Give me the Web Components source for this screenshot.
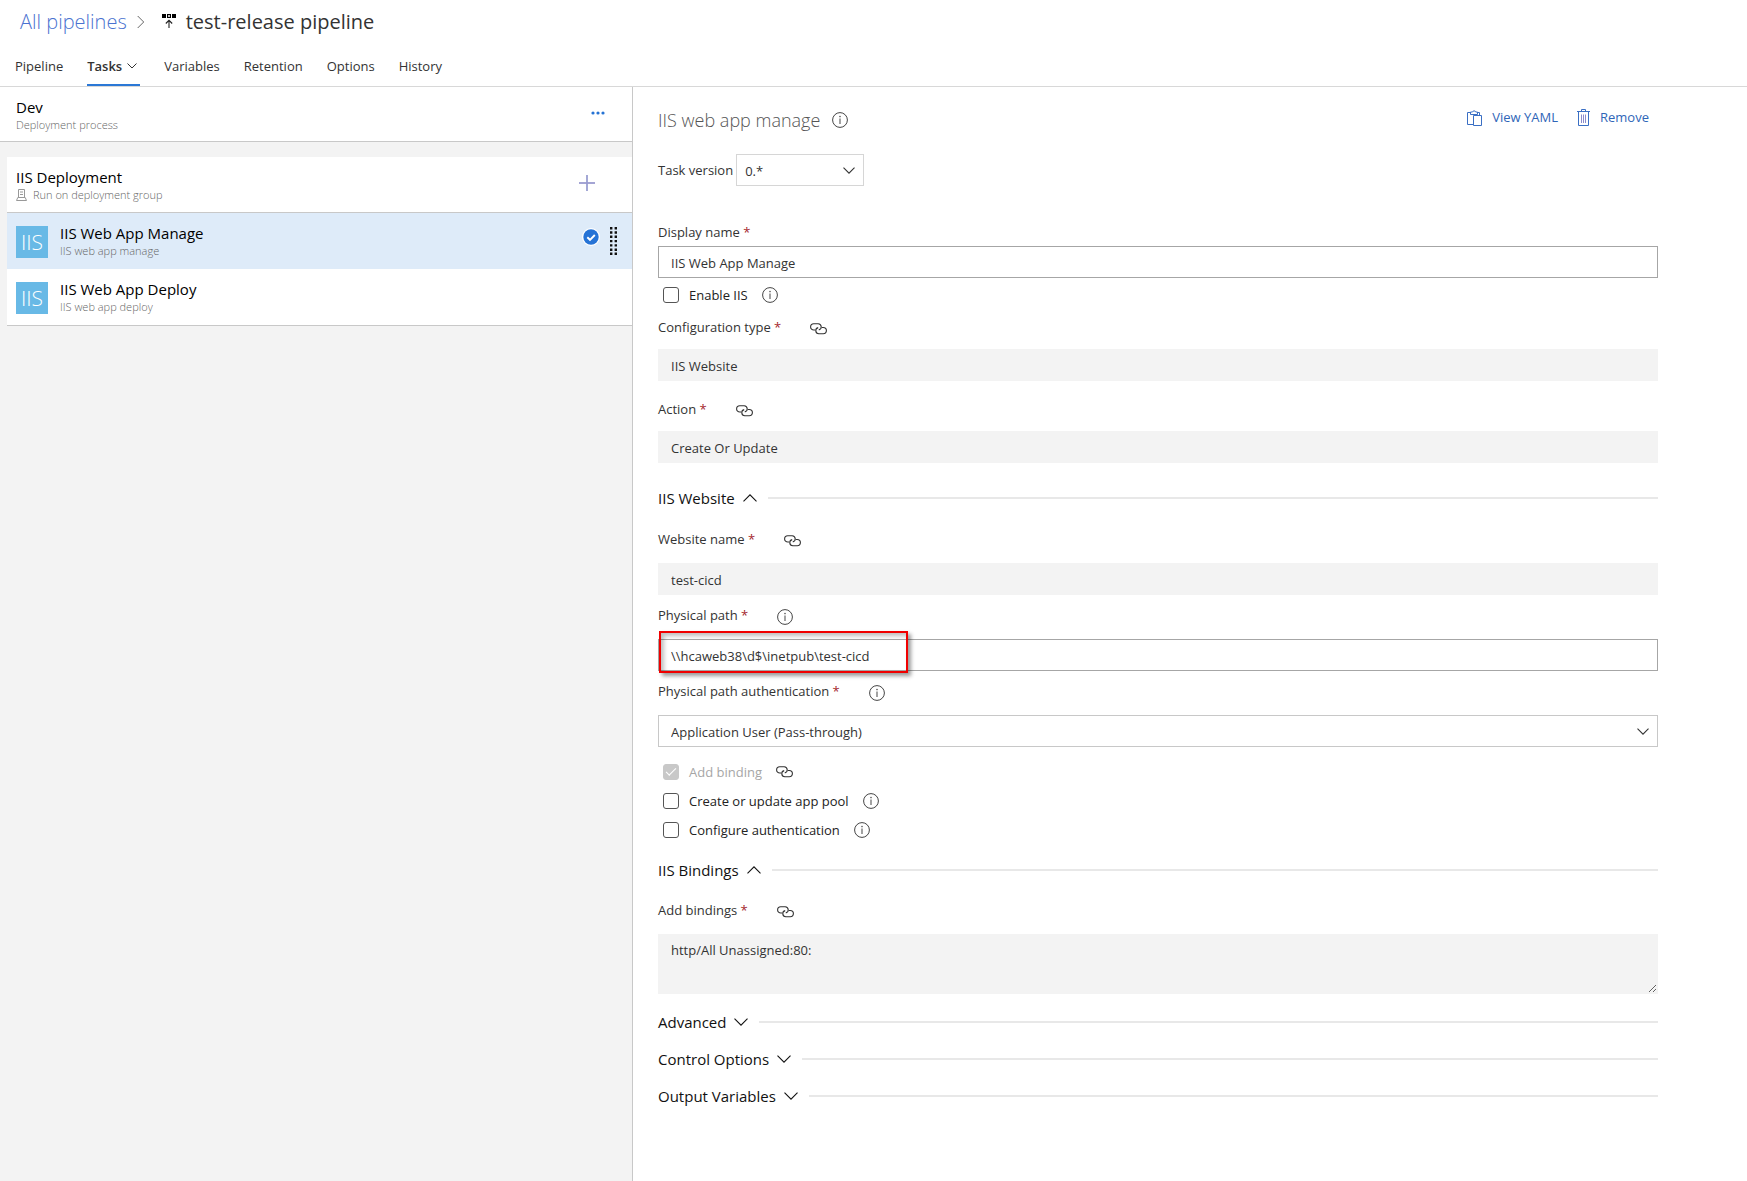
<!DOCTYPE html>
<html lang="en">
<head>
<meta charset="utf-8">
<title>test-release pipeline</title>
<style>
html, body { height: 100%; margin: 0; }
body { background: #fff; color: #333; font: 13px/20px "Open Sans", "Noto Sans", sans-serif; }
</style>
</head>
<body>
<release-editor></release-editor>
<script>
const reset = `
  *, *::before, *::after { box-sizing: border-box; }
  [hidden] { display: none !important; }
  svg { display: block; flex: none; }
  button, input, select, textarea { font: inherit; color: inherit; margin: 0; padding: 0; border: 0; background: none; border-radius: 0; }
  button { cursor: pointer; text-align: left; }
  a { color: inherit; text-decoration: none; }
`;

const define = (name, render, css, after) => customElements.define(name, class extends HTMLElement {
  connectedCallback() {
    if (this.shadowRoot) return;
    const root = this.attachShadow({ mode: "open" });
    root.innerHTML = `<style>${reset}${css}</style>${render(this)}`;
    if (after) after(this, root);
  }
});

const icons = {
  info: [16, 16, `<circle cx="8" cy="8" r="7.4" fill="none" stroke="#444"/><path d="M8 6.6V12" stroke="#555" stroke-width="1.1"/><circle cx="8" cy="4.6" r=".8" fill="#555"/>`],
  link: [17, 12, `<g fill="none" stroke="#333" stroke-width="1.1"><path d="M5.200 7H3.800A3.200 3.100 0 0 1 3.800.8H8.200A3.200 3.100 0 0 1 8.800 6.900"/><path d="M11.800 4.500H13.200A3.200 3.100 0 0 1 13.200 10.700H8.800A3.200 3.100 0 0 1 8.200 4.600"/></g>`],
  down: [12, 7, `<path d="M.5.6 6 6.100 11.500.6" fill="none" stroke="currentColor" stroke-width="1.1"/>`],
  smalldown: [10, 6, `<path d="M.5.5 5 5 9.500.5" fill="none" stroke="currentColor"/>`],
  up: [14, 8, `<path d="M.5 7.300 7 .8 13.500 7.300" fill="none" stroke="currentColor" stroke-width="1.1"/>`],
  bigdown: [14, 8, `<path d="M.5.7 7 7.200 13.500.7" fill="none" stroke="currentColor" stroke-width="1.1"/>`],
  right: [8, 14, `<path d="M.7 1 6.700 7 .7 13" fill="none" stroke="#666"/>`],
  release: [15, 14, `<path d="M0 0h4v4H0zM10 0h4v4h-4zM5 0h4v4H5z" fill="#000"/><path d="M6 1.200h2v1.600H6z" fill="#fff"/><path d="M7 14V6.500M3.800 9.500 7 6.300l3.200 3.200" fill="none" stroke="#222" stroke-width="1.1"/>`],
  dots: [14, 4, `<g fill="#2573d4"><circle cx="2" cy="2" r="1.600"/><circle cx="7" cy="2" r="1.600"/><circle cx="12" cy="2" r="1.600"/></g>`],
  plus: [16, 16, `<path d="M8 0V16" stroke="#7d83c4" stroke-width="1.400"/><path d="M0 8H16" stroke="#9a9bd0" stroke-width="1.800"/>`],
  check: [18, 18, `<circle cx="9" cy="9" r="9" fill="#fff"/><circle cx="9" cy="9" r="7.700" fill="#2673d6"/><path d="M5.300 9.200 8 11.800 12.800 7" fill="none" stroke="#fff" stroke-width="1.900"/>`],
  grip: [7, 28, `<g fill="#111">${[0,4.300,8.600,12.900,17.200,21.500,25.600].map(y => `<path d="M0 ${y}h2.400v2.400H0zM4.600 ${y}h2.400v2.400H4.600z"/>`).join("")}</g>`],
  server: [11, 12, `<g fill="none" stroke="#999"><path d="M2.500 8.500V.5h6v8M.5 11.500l1.300-3h7.400l1.300 3z"/><path d="M4 3h3M4 5.500h3"/></g>`],
  clip: [15, 17, `<g fill="none" stroke="#3a6fc4"><path d="M6.500 15.500H.5V3.500H3M10 3.500h2.500V6M3.500 5.500V3h2a1.700 1.700 0 0 1 3.200 0h1.800v2.500z"/><path d="M6.500 6.500h8v10h-8z"/></g>`],
  trash: [13, 17, `<g fill="none" stroke="#3a6fc4"><path d="M0 2.500h13M4.500 2.300V.5h4v1.800M1.500 3v13.500h10V3"/><path d="M4.500 5.500v8.500M6.500 5.500v8.500M8.500 5.500v8.500" stroke="#8c8ccc"/></g>`]
};

define("ui-icon", el => {
  const [w, h, body] = icons[el.getAttribute("name")];
  return `<svg width="${w}" height="${h}" viewBox="0 0 ${w} ${h}" aria-hidden="true">${body}</svg>`;
}, `:host { display: inline-flex; flex: none; }`);

define("page-header", () => `
  <nav class="crumbs"><a href="#all">All pipelines</a><ui-icon name="right"></ui-icon><h1><ui-icon name="release"></ui-icon>test-release pipeline</h1></nav>
  <nav class="tabs"><slot></slot></nav>`,
`:host { display: block; border-bottom: 1px solid #d8d8d8; }
 .crumbs { display: flex; align-items: center; height: 44px; padding-left: 20px; gap: 10px; font-size: 20px; line-height: 28px; }
 .crumbs a { color: #4a72d0; font-weight: 300; }
 h1 { display: flex; align-items: center; gap: 9px; margin: 0 0 0 7px; font: inherit; color: #333; }
 h1 ui-icon { padding-bottom: 2px; }
 .tabs { display: flex; gap: 24px; height: 42px; padding-left: 15px; }`);

define("nav-tab", el => `<a href="#tab"><slot></slot>${el.hasAttribute("current") ? `<ui-icon name="smalldown"></ui-icon>` : ""}</a>`,
`:host { display: block; }
 a { display: flex; align-items: center; height: 42px; gap: 5px; color: #333; padding-top: 4px; border-bottom: 2px solid transparent; }
 :host([current]) a { font-weight: 600; border-color: #2b78d6; padding-right: 3px; }`);

define("stage-card", () => `
  <div class="text"><div class="name"><slot></slot></div><div class="sub"><slot name="icon"></slot><slot name="sub"></slot></div></div>
  <button type="button" aria-label="Action"><slot name="action"></slot></button>`,
`:host { display: flex; align-items: center; justify-content: space-between; background: #fff; border-bottom: 1px solid #c8c8c8; padding-left: 16px; }
 .name { font-size: 15px; line-height: 20px; color: #000; }
 .sub { display: flex; align-items: center; gap: 6px; font-size: 11px; line-height: 16px; color: #666; font-weight: 300; }
 button { display: flex; margin-right: var(--action-right, 27px); padding-bottom: 4px; }`);

define("task-row", el => `
  <a href="#task"><span class="logo">IIS</span><span><span class="name"><slot></slot></span><span class="sub"><slot name="sub"></slot></span></span></a>
  ${el.hasAttribute("selected") ? `<span class="state"><ui-icon name="check"></ui-icon><ui-icon name="grip"></ui-icon></span>` : ""}`,
`:host { display: flex; align-items: center; justify-content: space-between; height: 56px; background: #fff; padding: 0 15px 0 9px; }
 :host([selected]) { background: #deebf9; }
 a { display: flex; align-items: center; gap: 12px; padding-top: 2px; }
 a > span:last-child { margin-top: -2px; }
 .logo { width: 32px; height: 32px; background: #68b9e6; color: #fff; font-size: 21px; line-height: 32px; text-align: center; font-weight: 300; }
 .name, .sub { display: block; }
 .name { font-size: 15px; line-height: 20px; color: #000; }
 .sub { font-size: 11px; line-height: 16px; color: #666; font-weight: 300; }
 .state { display: flex; align-items: center; gap: 10px; }
 .state ui-icon:first-child { padding-bottom: 8px; }`);

define("process-panel", () => `
  <stage-card class="stage">Dev<span slot="sub">Deployment process</span><ui-icon slot="action" name="dots"></ui-icon></stage-card>
  <div class="list">
    <stage-card class="phase">IIS Deployment<ui-icon slot="icon" name="server"></ui-icon><span slot="sub">Run on deployment group</span><ui-icon slot="action" name="plus"></ui-icon></stage-card>
    <task-row selected>IIS Web App Manage<span slot="sub">IIS web app manage</span></task-row>
    <task-row>IIS Web App Deploy<span slot="sub">IIS web app deploy</span></task-row>
  </div>`,
`:host { display: block; background: #f3f3f3; border-right: 1px solid #c8c8c8; }
 .stage { height: 55px; padding-top: 2px; --action-right: 27px; }
 .list { margin: 15px 0 0 7px; border-bottom: 1px solid #c8c8c8; }
 .phase { height: 56px; padding-left: 9px; --action-right: 37px; }`);

define("link-button", el => `<button type="button"><ui-icon name="${el.getAttribute("icon")}"></ui-icon><slot></slot></button>`,
`:host { display: block; }
 button { display: flex; align-items: center; gap: 10px; color: #2f66b8; line-height: 20px; }`);

const hint = el => el.hasAttribute("hint") ? `<ui-icon class="hint" name="${el.getAttribute("hint")}"></ui-icon>` : "";

define("form-field", el => {
  const value = el.getAttribute("value");
  const off = el.hasAttribute("readonly") ? "readonly" : "";
  const control = {
    text: `<input id="c" type="text" value="${value}" ${off}>`,
    area: `<textarea id="c" ${off}>${value}</textarea>`,
    select: `<select id="c"><option>${value}</option></select><ui-icon class="arrow" name="down"></ui-icon>`
  }[el.getAttribute("kind") || "text"];
  return `<div class="label"><label for="c"><slot></slot>${el.hasAttribute("required") ? `<span class="req"> *</span>` : ""}</label>${hint(el)}</div>
  <div class="control">${control}${el.hasAttribute("marked") ? `<div class="mark"></div>` : ""}</div>`;
},
`:host { display: flex; flex-direction: column; gap: var(--field-gap, 14px); }
 .label { display: flex; align-items: center; height: 20px; gap: 29px; color: #333; }
 .hint { padding-top: 3px; }
 .req { color: #a4262c; }
 .control { display: grid; position: relative; align-items: center; }
 input, select, textarea { grid-area: 1 / 1; width: 100%; height: 32px; padding: 1px 12px 0; border: 1px solid #a6a6a6; background: #fff; color: #333; outline: 0; }
 select { appearance: none; border-color: #c8c8c8; }
 textarea { display: block; height: 60px; padding-top: 5px; resize: vertical; }
 [readonly] { background: #f3f3f3; border-color: #f3f3f3; }
 .arrow { grid-area: 1 / 1; justify-self: end; margin-right: 9px; pointer-events: none; }
 .mark { position: absolute; left: 1px; top: -8px; width: 249px; height: 42px; border: 2px solid #f00000; box-shadow: 3px 3px 4px rgba(0,0,0,.4), inset 3px 3px 4px rgba(0,0,0,.25); pointer-events: none; }
 :host([inline]) { flex-direction: row; align-items: center; gap: 3px; }
 :host([inline]) .control { width: 128px; }
 :host([inline]) select { padding-left: 8px; border-color: #d6d6d6; }`);

define("check-field", el => `<input id="c" type="checkbox" ${el.hasAttribute("locked") ? "checked disabled" : ""}><label for="c"><slot></slot></label>${hint(el)}`,
`:host { display: flex; align-items: center; height: 28px; padding-left: 5px; color: #222; }
 input { appearance: none; display: grid; place-items: center; width: 16px; height: 16px; border: 1px solid #555; border-radius: 3px; background: #fff; }
 input:checked { background: #c8c8c8; border-color: #c8c8c8; }
 input:checked::before { content: ""; width: 10px; height: 5px; margin-bottom: 3px; border: solid #fff; border-width: 0 0 1px 1px; transform: rotate(-45deg); }
 label { margin: 0 14px 0 10px; }
 :host([locked]) label { color: #a6a6a6; }`);

define("section-head", el => `<button type="button" aria-expanded="${el.hasAttribute("open")}"><slot></slot><ui-icon name="${el.hasAttribute("open") ? "up" : "bigdown"}"></ui-icon></button><span class="line"></span>`,
`:host { display: flex; align-items: center; gap: 11px; }
 button { display: flex; align-items: center; gap: 8px; font-size: 15px; line-height: 22px; color: #111; }
 .line { flex: 1; height: 2px; background: #e8e8e8; }`);

define("task-details", () => `
  <header><h2>IIS web app manage<ui-icon name="info"></ui-icon></h2>
    <div class="actions"><link-button icon="clip">View YAML</link-button><link-button icon="trash">Remove</link-button></div></header>
  <form-field class="version" inline kind="select" value="0.*">Task version</form-field>
  <form-field class="display" required value="IIS Web App Manage">Display name</form-field>
  <check-field class="enable" hint="info">Enable IIS</check-field>
  <form-field class="config" required readonly hint="link" value="IIS Website">Configuration type</form-field>
  <form-field class="action" required readonly hint="link" value="Create Or Update">Action</form-field>
  <section-head class="site" open>IIS Website</section-head>
  <div class="fields">
    <form-field required readonly hint="link" value="test-cicd">Website name</form-field>
    <form-field required marked hint="info" value="\\\\hcaweb38\\d$\\inetpub\\test-cicd">Physical path</form-field>
    <form-field required kind="select" hint="info" value="Application User (Pass-through)">Physical path authentication</form-field>
  </div>
  <div class="checks">
    <check-field locked hint="link">Add binding</check-field>
    <check-field hint="info">Create or update app pool</check-field>
    <check-field hint="info">Configure authentication</check-field>
  </div>
  <section-head class="bindings" open>IIS Bindings</section-head>
  <form-field class="bind" required readonly kind="area" hint="link" value="http/All Unassigned:80:">Add bindings</form-field>
  <div class="more"><section-head>Advanced</section-head><section-head>Control Options</section-head><section-head>Output Variables</section-head></div>`,
`:host { display: flex; flex-direction: column; padding: 20px 89px 40px 25px; }
 header { display: flex; justify-content: space-between; align-items: flex-start; }
 h2 { display: flex; align-items: center; gap: 12px; margin: 0; font-size: 18px; line-height: 26px; font-weight: 300; color: #555; }
 .actions { display: flex; gap: 19px; padding-right: 9px; }
 .version { margin-top: 21px; }
 .display { margin-top: 36px; --field-gap: 4px; }
 .enable { margin-top: 3px; }
 .config { margin-top: 8px; --field-gap: 12px; }
 .action { margin-top: 18px; --field-gap: 12px; }
 .site { margin-top: 24px; }
 .fields { display: flex; flex-direction: column; gap: 10px; margin-top: 20px; }
 .checks { display: flex; flex-direction: column; gap: 1px; margin-top: 11px; }
 .bindings { margin-top: 15px; }
 .bind { margin-top: 19px; }
 .more { display: flex; flex-direction: column; gap: 15px; margin-top: 17px; }`);

define("release-editor", () => `
  <page-header><nav-tab>Pipeline</nav-tab><nav-tab current>Tasks</nav-tab><nav-tab>Variables</nav-tab><nav-tab>Retention</nav-tab><nav-tab>Options</nav-tab><nav-tab>History</nav-tab></page-header>
  <main><process-panel></process-panel><task-details></task-details></main>`,
`:host { display: flex; flex-direction: column; min-height: 100%; }
 main { display: flex; flex: 1; }
 process-panel { flex: 0 0 633px; }
 task-details { flex: 1; min-width: 0; }`);
</script>
</body>
</html>
